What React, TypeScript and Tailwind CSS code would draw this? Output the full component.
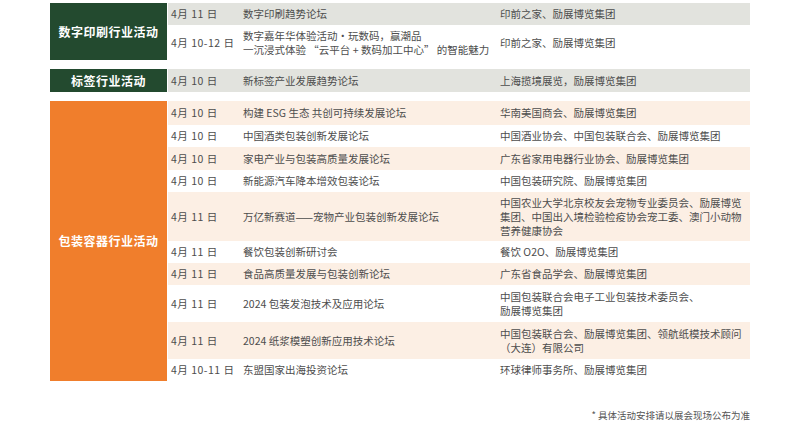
type Row = {
  date: string;
  topic: string[];
  org: string[];
  h: string;
  bg: string;
};

type Group = {
  label: string;
  color: string;
  rows: Row[];
};

const GREY = "bg-[#e2e3de]";
const WHITE = "bg-white";
const BEIGE = "bg-[#fcefe4]";

const groups: Group[] = [
  {
    label: "数字印刷行业活动",
    color: "bg-[#234a2f]",
    rows: [
      { date: "4月 11 日", topic: ["数字印刷趋势论坛"], org: ["印前之家、励展博览集团"], h: "h-[22px]", bg: GREY },
      {
        date: "4月 10-12 日",
        topic: ["数字嘉年华体验活动·玩数码，赢潮品", "一沉浸式体验 “云平台 + 数码加工中心” 的智能魅力"],
        org: ["印前之家、励展博览集团"],
        h: "h-[35px]",
        bg: WHITE,
      },
    ],
  },
  {
    label: "标签行业活动",
    color: "bg-[#234a2f]",
    rows: [
      { date: "4月 10 日", topic: ["新标签产业发展趋势论坛"], org: ["上海揽境展览，励展博览集团"], h: "h-[23px]", bg: GREY },
    ],
  },
  {
    label: "包装容器行业活动",
    color: "bg-[#f07e2c]",
    rows: [
      { date: "4月 10 日", topic: ["构建 ESG 生态 共创可持续发展论坛"], org: ["华南美国商会、励展博览集团"], h: "h-[24px]", bg: BEIGE },
      { date: "4月 10 日", topic: ["中国酒类包装创新发展论坛"], org: ["中国酒业协会、中国包装联合会、励展博览集团"], h: "h-[22px]", bg: WHITE },
      { date: "4月 10 日", topic: ["家电产业与包装高质量发展论坛"], org: ["广东省家用电器行业协会、励展博览集团"], h: "h-[23px]", bg: BEIGE },
      { date: "4月 10 日", topic: ["新能源汽车降本增效包装论坛"], org: ["中国包装研究院、励展博览集团"], h: "h-[22px]", bg: WHITE },
      {
        date: "4月 11 日",
        topic: ["万亿新赛道——宠物产业包装创新发展论坛"],
        org: ["中国农业大学北京校友会宠物专业委员会、励展博览", "集团、中国出入境检验检疫协会宠工委、澳门小动物", "营养健康协会"],
        h: "h-[49px]",
        bg: BEIGE,
      },
      { date: "4月 11 日", topic: ["餐饮包装创新研讨会"], org: ["餐饮 O2O、励展博览集团"], h: "h-[22px]", bg: WHITE },
      { date: "4月 11 日", topic: ["食品高质量发展与包装创新论坛"], org: ["广东省食品学会、励展博览集团"], h: "h-[22px]", bg: BEIGE },
      {
        date: "4月 11 日",
        topic: ["2024 包装发泡技术及应用论坛"],
        org: ["中国包装联合会电子工业包装技术委员会、", "励展博览集团"],
        h: "h-[37px]",
        bg: WHITE,
      },
      {
        date: "4月 11 日",
        topic: ["2024 纸浆模塑创新应用技术论坛"],
        org: ["中国包装联合会、励展博览集团、领航纸模技术顾问", "（大连）有限公司"],
        h: "h-[37px]",
        bg: BEIGE,
      },
      { date: "4月 10-11 日", topic: ["东盟国家出海投资论坛"], org: ["环球律师事务所、励展博览集团"], h: "h-[22px]", bg: WHITE },
    ],
  },
];

function Lines({ lines }: { lines: string[] }) {
  return (
    <div className="flex flex-col">
      {lines.map((l, i) => (
        <span key={i} className="whitespace-nowrap">
          {l}
        </span>
      ))}
    </div>
  );
}

function GroupBlock({ group }: { group: Group }) {
  return (
    <div className="flex">
      <div
        className={`flex w-[117px] shrink-0 items-center justify-center text-[12px] font-bold tracking-[0.5px] text-white ${group.color}`}
      >
        {group.label}
      </div>
      <div className="ml-[1px] flex flex-1 flex-col">
        {group.rows.map((r, i) => (
          <div key={i} className={`grid grid-cols-[72px_257px_1fr] items-center ${r.h} ${r.bg}`}>
            <div className="pl-[3px] whitespace-nowrap tracking-[0.5px]">{r.date}</div>
            <div className="pl-[3px]">
              <Lines lines={r.topic} />
            </div>
            <div className="pl-[3px]">
              <Lines lines={r.org} />
            </div>
          </div>
        ))}
      </div>
    </div>
  );
}

export default function App() {
  return (
    <div className="h-[435px] w-[800px] bg-white font-['Noto_Sans_CJK_SC',sans-serif] text-[10.5px] leading-[14px] text-[#4d4d4d]">
      <div className="ml-[50px] w-[700px] pt-[3px]">
        <div className="flex flex-col gap-[9px]">
          {groups.map((g) => (
            <GroupBlock key={g.label} group={g} />
          ))}
        </div>
        <div className="mt-[27px] text-right text-[9.5px] text-[#555]">* 具体活动安排请以展会现场公布为准</div>
      </div>
    </div>
  );
}
